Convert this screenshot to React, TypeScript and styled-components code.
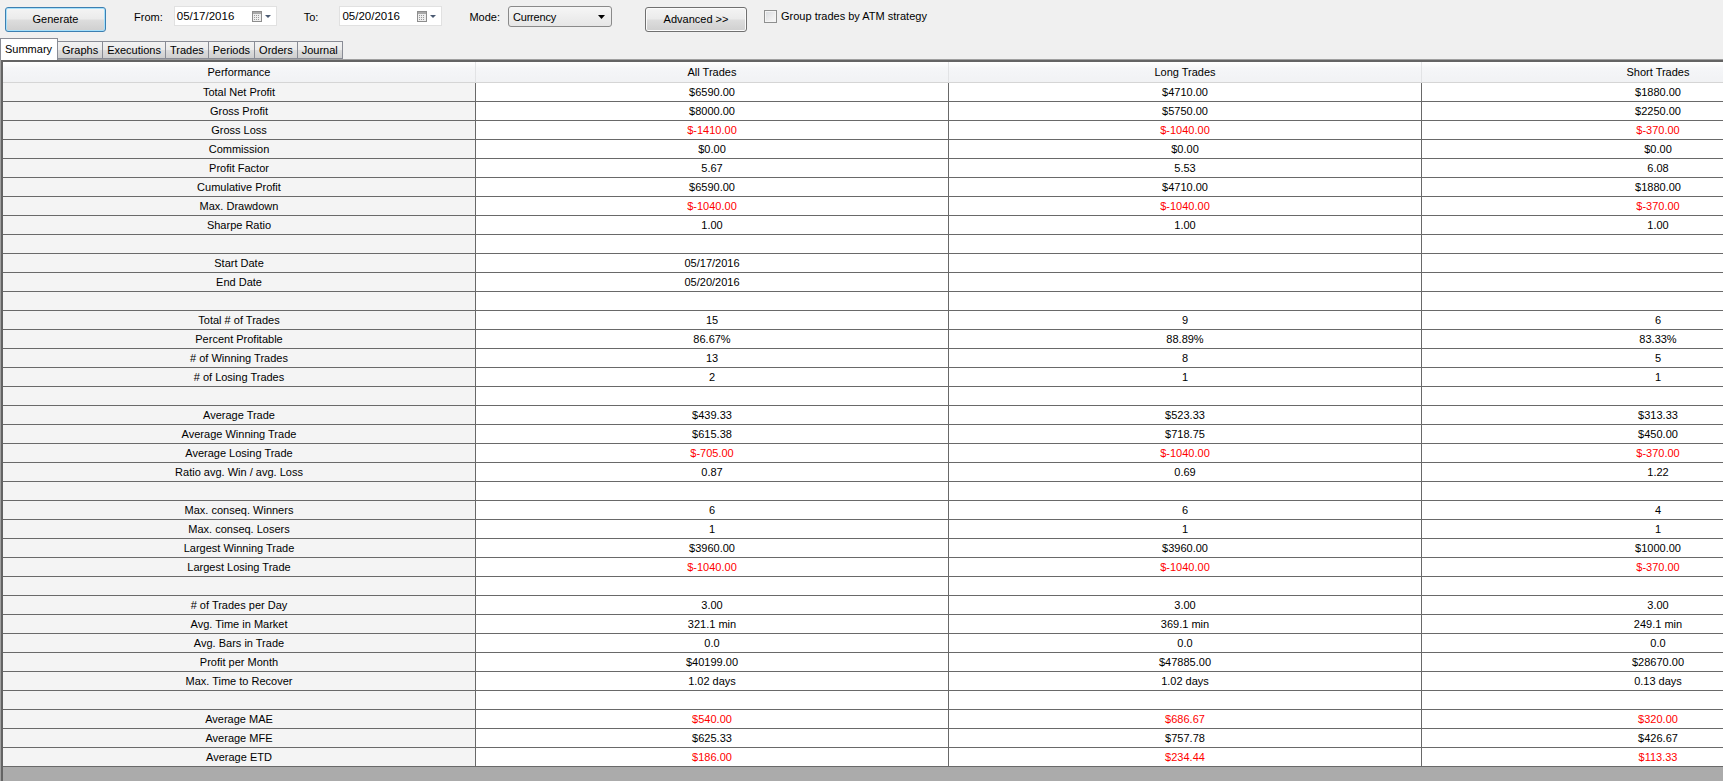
import React from "react";
import styled, { createGlobalStyle } from "styled-components";

const GlobalStyle = createGlobalStyle`
  html, body {
    margin: 0;
    padding: 0;
    height: 100%;
    overflow: hidden;
    background: #f0f0f0;
  }
  body {
    font-family: "Liberation Sans", Arial, sans-serif;
    font-size: 11px;
    color: #000;
  }
  #root {
    height: 100%;
  }
`;

const Window = styled.div`
  display: flex;
  flex-direction: column;
  width: 100vw;
  height: 100vh;
  background: #f0f0f0;
`;

/* ---------- toolbar ---------- */

const Toolbar = styled.div`
  display: flex;
  align-items: flex-start;
  height: 38px;
  flex: none;
`;

const Spot = styled.div<{ $left: number; $top: number }>`
  display: flex;
  align-items: center;
  margin-left: ${(p) => p.$left}px;
  margin-top: ${(p) => p.$top}px;
`;

const PushButton = styled.button<{ $w: number; $focused?: boolean }>`
  width: ${(p) => p.$w}px;
  height: 25px;
  padding: 0;
  border: 1px solid ${(p) => (p.$focused ? "#3c7fb1" : "#707070")};
  border-radius: 3px;
  background: linear-gradient(
    to bottom,
    #f4f4f4 0%,
    #ebebeb 48%,
    #dddddd 52%,
    #cfcfcf 100%
  );
  box-shadow: ${(p) =>
    p.$focused ? "inset 0 0 0 1px #a6e0fb" : "inset 0 0 0 1px #fbfbfb"};
  font-family: "Liberation Sans", Arial, sans-serif;
  font-size: 11px;
  color: #000;
  text-align: center;
  line-height: 21px;
`;

const Label = styled.span`
  font-size: 11px;
  line-height: 13px;
  color: #000;
`;

const DateBox = styled.div`
  display: flex;
  align-items: center;
  width: 103px;
  height: 20px;
  box-sizing: border-box;
  border: 1px solid #e1e1e1;
  background: #fff;
  padding: 0 4px 0 2px;
`;

const DateText = styled.span`
  flex: 1;
  font-size: 11.5px;
  color: #000;
`;

const ModeSelect = styled.div`
  display: flex;
  align-items: center;
  width: 104px;
  height: 21px;
  box-sizing: border-box;
  border: 1px solid #8a8a8a;
  border-radius: 3px;
  background: linear-gradient(to bottom, #f6f6f6, #e6e6e6);
  padding: 0 6px 0 4px;
`;

const ModeText = styled.span`
  flex: 1;
  font-size: 11px;
  letter-spacing: -0.2px;
`;

const CheckBox = styled.span`
  display: inline-block;
  width: 13px;
  height: 13px;
  box-sizing: border-box;
  border: 1px solid #8e8f8f;
  background: linear-gradient(135deg, #d6d9de 0%, #eeeeee 60%, #f8f8f8 100%);
  box-shadow: inset 0 0 0 1px #f4f4f4;
  margin-right: 4px;
`;

const CalendarIcon = () => (
  <svg width="20" height="11" viewBox="0 0 20 11">
    <rect x="0.5" y="0.5" width="9" height="10" fill="#eeeeee" stroke="#8d8d8d" />
    <rect x="1" y="1" width="8" height="2" fill="#a9a9a9" />
    <g fill="#9a9a9a">
      <rect x="2" y="4" width="1" height="1" />
      <rect x="4" y="4" width="1" height="1" />
      <rect x="6" y="4" width="1" height="1" />
      <rect x="2" y="6" width="1" height="1" />
      <rect x="4" y="6" width="1" height="1" />
      <rect x="6" y="6" width="1" height="1" />
      <rect x="2" y="8" width="1" height="1" />
      <rect x="4" y="8" width="1" height="1" />
      <rect x="6" y="8" width="1" height="1" />
    </g>
    <path d="M13 4 L19 4 L16 7 Z" fill="#4a5a72" />
  </svg>
);

const ComboArrow = () => (
  <svg width="7" height="4" viewBox="0 0 7 4">
    <path d="M0 0 L7 0 L3.5 4 Z" fill="#000" />
  </svg>
);

/* ---------- tabs ---------- */

const TabStrip = styled.div`
  display: flex;
  align-items: flex-end;
  height: 21px;
  flex: none;
  position: relative;
  z-index: 1;
`;

const Tab = styled.div<{ $active?: boolean }>`
  box-sizing: border-box;
  height: ${(p) => (p.$active ? 22 : 18)}px;
  margin-bottom: ${(p) => (p.$active ? -1 : 0)}px;
  padding: ${(p) => (p.$active ? "0 5px 2px 4px" : "0 4px")};
  margin-left: -1px;
  border: 1px solid #898c95;
  border-bottom: ${(p) => (p.$active ? "none" : "1px solid #898c95")};
  background: ${(p) =>
    p.$active
      ? "#ffffff"
      : "linear-gradient(to bottom, #f2f2f2 0%, #ebebeb 50%, #dddddd 51%, #cfcfcf 100%)"};
  display: flex;
  align-items: center;
  font-size: 11px;
  white-space: nowrap;
  &:first-child {
    margin-left: 0;
  }
`;

/* ---------- grid ---------- */

const GridFrame = styled.div`
  flex: 1;
  display: flex;
  flex-direction: column;
  min-height: 0;
  border-top: 1px solid #a0a0a0;
  border-left: 1px solid #a0a0a0;
`;

const GridView = styled.div`
  flex: 1;
  min-height: 0;
  overflow: hidden;
  background: #ababab;
  border-top: 2px solid #646464;
  border-left: 2px solid #646464;
`;

const Sheet = styled.div`
  display: grid;
  grid-template-columns: repeat(4, 473px);
  width: max-content;
`;

const HeadCell = styled.div`
  box-sizing: border-box;
  height: 21px;
  display: flex;
  align-items: center;
  justify-content: center;
  background: linear-gradient(to bottom, #ffffff 0%, #f5f6f8 30%, #f1f2f4 100%);
  border-right: 1px solid #e2e3e5;
  border-bottom: 1px solid #d5d5d5;
  font-size: 11px;
`;

const Cell = styled.div<{ $label?: boolean; $loss?: boolean }>`
  box-sizing: border-box;
  height: 19px;
  display: flex;
  align-items: center;
  justify-content: center;
  background: ${(p) => (p.$label ? "#f4f4f4" : "#ffffff")};
  border-right: 1px solid #696969;
  border-bottom: 1px solid #696969;
  color: ${(p) => (p.$loss ? "#ff0000" : "#000000")};
  font-size: 11px;
  white-space: nowrap;
`;

type Value = string | { v: string; red: true };

const r = (v: string): Value => ({ v, red: true });

type Row = [string, Value, Value, Value] | null;

const rows: Row[] = [
  ["Total Net Profit", "$6590.00", "$4710.00", "$1880.00"],
  ["Gross Profit", "$8000.00", "$5750.00", "$2250.00"],
  ["Gross Loss", r("$-1410.00"), r("$-1040.00"), r("$-370.00")],
  ["Commission", "$0.00", "$0.00", "$0.00"],
  ["Profit Factor", "5.67", "5.53", "6.08"],
  ["Cumulative Profit", "$6590.00", "$4710.00", "$1880.00"],
  ["Max. Drawdown", r("$-1040.00"), r("$-1040.00"), r("$-370.00")],
  ["Sharpe Ratio", "1.00", "1.00", "1.00"],
  null,
  ["Start Date", "05/17/2016", "", ""],
  ["End Date", "05/20/2016", "", ""],
  null,
  ["Total # of Trades", "15", "9", "6"],
  ["Percent Profitable", "86.67%", "88.89%", "83.33%"],
  ["# of Winning Trades", "13", "8", "5"],
  ["# of Losing Trades", "2", "1", "1"],
  null,
  ["Average Trade", "$439.33", "$523.33", "$313.33"],
  ["Average Winning Trade", "$615.38", "$718.75", "$450.00"],
  ["Average Losing Trade", r("$-705.00"), r("$-1040.00"), r("$-370.00")],
  ["Ratio avg. Win / avg. Loss", "0.87", "0.69", "1.22"],
  null,
  ["Max. conseq. Winners", "6", "6", "4"],
  ["Max. conseq. Losers", "1", "1", "1"],
  ["Largest Winning Trade", "$3960.00", "$3960.00", "$1000.00"],
  ["Largest Losing Trade", r("$-1040.00"), r("$-1040.00"), r("$-370.00")],
  null,
  ["# of Trades per Day", "3.00", "3.00", "3.00"],
  ["Avg. Time in Market", "321.1 min", "369.1 min", "249.1 min"],
  ["Avg. Bars in Trade", "0.0", "0.0", "0.0"],
  ["Profit per Month", "$40199.00", "$47885.00", "$28670.00"],
  ["Max. Time to Recover", "1.02 days", "1.02 days", "0.13 days"],
  null,
  ["Average MAE", r("$540.00"), r("$686.67"), r("$320.00")],
  ["Average MFE", "$625.33", "$757.78", "$426.67"],
  ["Average ETD", r("$186.00"), r("$234.44"), r("$113.33")],
];

const headers = ["Performance", "All Trades", "Long Trades", "Short Trades"];
const tabs = ["Summary", "Graphs", "Executions", "Trades", "Periods", "Orders", "Journal"];

const ValueCell = ({ value }: { value: Value }) =>
  typeof value === "string" ? (
    <Cell>{value}</Cell>
  ) : (
    <Cell $loss>{value.v}</Cell>
  );

export default function App() {
  return (
    <>
      <GlobalStyle />
      <Window>
        <Toolbar>
          <Spot $left={5} $top={7}>
            <PushButton $w={101} $focused>
              Generate
            </PushButton>
          </Spot>
          <Spot $left={28} $top={11}>
            <Label>From:</Label>
          </Spot>
          <Spot $left={11} $top={6}>
            <DateBox>
              <DateText>05/17/2016</DateText>
              <CalendarIcon />
            </DateBox>
          </Spot>
          <Spot $left={27} $top={11}>
            <Label>To:</Label>
          </Spot>
          <Spot $left={21} $top={6}>
            <DateBox>
              <DateText>05/20/2016</DateText>
              <CalendarIcon />
            </DateBox>
          </Spot>
          <Spot $left={27} $top={11}>
            <Label>Mode:</Label>
          </Spot>
          <Spot $left={8} $top={6}>
            <ModeSelect>
              <ModeText>Currency</ModeText>
              <ComboArrow />
            </ModeSelect>
          </Spot>
          <Spot $left={33} $top={7}>
            <PushButton $w={102}>Advanced &gt;&gt;</PushButton>
          </Spot>
          <Spot $left={17} $top={10}>
            <CheckBox />
            <Label>Group trades by ATM strategy</Label>
          </Spot>
        </Toolbar>

        <TabStrip>
          {tabs.map((t, i) => (
            <Tab key={t} $active={i === 0}>
              {t}
            </Tab>
          ))}
        </TabStrip>

        <GridFrame>
          <GridView>
            <Sheet>
              {headers.map((h) => (
                <HeadCell key={h}>{h}</HeadCell>
              ))}
              {rows.map((row, i) =>
                row ? (
                  <React.Fragment key={i}>
                    <Cell $label>{row[0]}</Cell>
                    <ValueCell value={row[1]} />
                    <ValueCell value={row[2]} />
                    <ValueCell value={row[3]} />
                  </React.Fragment>
                ) : (
                  <React.Fragment key={i}>
                    <Cell $label />
                    <Cell />
                    <Cell />
                    <Cell />
                  </React.Fragment>
                )
              )}
            </Sheet>
          </GridView>
        </GridFrame>
      </Window>
    </>
  );
}
